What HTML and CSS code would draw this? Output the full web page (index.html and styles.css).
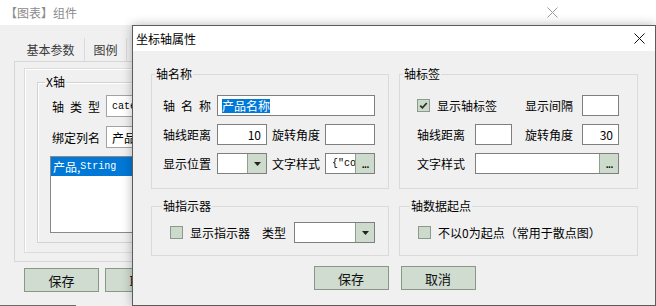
FILE: index.html
```html
<!DOCTYPE html>
<html lang="zh">
<head>
<meta charset="utf-8">
<title>坐标轴属性</title>
<link rel="stylesheet" href="styles.css">
</head>
<body>
<div class="back">
  <div class="back-title">
    <span>【图表】组件</span>
    <svg class="x-icon" width="11" height="11" viewBox="0 0 11 11"><path d="M0.5 0.5 L10.5 10.5 M10.5 0.5 L0.5 10.5" stroke="#9a9a9a" stroke-width="1" fill="none"/></svg>
  </div>
  <div class="tabs">
    <span class="tab tab-first">基本参数</span>
    <span class="tab">图例</span>
    <span class="tab"></span>
  </div>
  <div class="panel">
    <div class="panel-inner">
      <fieldset class="xgroup">
        <legend>X轴</legend>
        <div class="xrow"><span class="xlabel">轴&ensp;类&ensp;型</span><span class="xfield mono">category</span></div>
        <div class="xrow"><span class="xlabel">绑定列名</span><span class="xfield">产品</span></div>
        <div class="listbox"><div class="list-sel">产品,<span class="mono">String</span></div></div>
      </fieldset>
    </div>
  </div>
  <div class="back-buttons">
    <span class="btn">保存</span>
    <span class="btn">取消</span>
  </div>
  <div class="back-foot"></div>
</div>

<div class="dialog">
  <div class="dlg-title">
    <span>坐标轴属性</span>
    <svg class="x-icon" width="11" height="11" viewBox="0 0 11 11"><path d="M0.5 0.5 L10.5 10.5 M10.5 0.5 L0.5 10.5" stroke="#111" stroke-width="1" fill="none"/></svg>
  </div>
  <div class="dlg-body">
    <div class="groups">
      <fieldset class="group">
        <legend>轴名称</legend>
        <div class="grid g-name">
          <span class="lbl">轴&ensp;名&ensp;称</span>
          <span class="field span3"><span class="sel">产品名称</span></span>
          <span class="lbl">轴线距离</span>
          <span class="field num">10</span>
          <span class="lbl lbl-pad">旋转角度</span>
          <span class="field"></span>
          <span class="lbl">显示位置</span>
          <span class="field combo"><span class="combo-btn"><svg width="7" height="4" viewBox="0 0 7 4"><path d="M0 0 H7 L3.5 4 Z" fill="#222"/></svg></span></span>
          <span class="lbl lbl-pad">文字样式</span>
          <span class="field combo"><span class="field-text mono">{"co</span><span class="combo-btn dots">...</span></span>
        </div>
      </fieldset>
      <fieldset class="group">
        <legend>轴标签</legend>
        <div class="grid g-label">
          <span class="check-item span2"><span class="check on"><svg width="11" height="11" viewBox="0 0 11 11"><path d="M2.2 5.6 L4.4 7.8 L8.8 3" stroke="#2b2b2b" stroke-width="1.7" fill="none"/></svg></span>显示轴标签</span>
          <span class="lbl lbl-pad2">显示间隔</span>
          <span class="field"></span>
          <span class="lbl">轴线距离</span>
          <span class="field"></span>
          <span class="lbl lbl-pad2">旋转角度</span>
          <span class="field num">30</span>
          <span class="lbl">文字样式</span>
          <span class="field combo span3"><span class="field-text"></span><span class="combo-btn dots">...</span></span>
        </div>
      </fieldset>
      <fieldset class="group group-low">
        <legend>轴指示器</legend>
        <div class="line-row">
          <span class="check"></span>
          <span>显示指示器</span>
          <span class="type-lbl">类型</span>
          <span class="field combo type-combo"><span class="combo-btn"><svg width="7" height="4" viewBox="0 0 7 4"><path d="M0 0 H7 L3.5 4 Z" fill="#222"/></svg></span></span>
        </div>
      </fieldset>
      <fieldset class="group group-low">
        <legend>轴数据起点</legend>
        <div class="line-row">
          <span class="check"></span>
          <span>不以0为起点（常用于散点图）</span>
        </div>
      </fieldset>
    </div>
    <div class="dlg-buttons">
      <span class="btn">保存</span>
      <span class="btn">取消</span>
    </div>
  </div>
</div>
</body>
</html>
```
FILE: styles.css
```css
* { box-sizing: border-box; }
html, body { margin: 0; padding: 0; }
body {
  width: 656px;
  height: 306px;
  overflow: hidden;
  position: relative;
  background: #fff;
  font-family: "Noto Sans CJK SC", "Microsoft YaHei", sans-serif;
  font-size: 12px;
  color: #000;
}
.mono { font-family: "Liberation Mono", "Noto Sans CJK SC", monospace; font-size: 10px; }

/* ---------- background window ---------- */
.back {
  width: 568px;
  height: 306px;
  background: #f0f0f0;
  overflow: hidden;
}
.back-title {
  height: 25px;
  background: #fff;
  display: flex;
  align-items: center;
  justify-content: space-between;
  padding: 0 10px 0 5px;
  color: #8c8c8c;
}
.tabs {
  display: flex;
  height: 23px;
  margin: 13px 0 0 14px;
}
.tab {
  display: flex;
  align-items: center;
  justify-content: center;
  width: 42px;
  border-right: 1px solid #dadada;
  color: #3a3a3a;
}
.tab-first { width: 71px; padding-left: 3px; }
.panel {
  margin-left: 14px;
  width: 540px;
  height: 201px;
  border: 1px solid #d6d6d6;
  padding: 6px 0 0 9px;
}
.panel-inner {
  width: 520px;
  height: 185px;
  border: 1px solid #dcdcdc;
  box-shadow: inset 1px 1px 0 #fff;
  padding: 5px 0 0 12px;
}
.xgroup {
  margin: 0;
  width: 500px;
  height: 169px;
  border: 1px solid #d2d2d2;
  box-shadow: inset 1px 1px 0 #fff;
  padding: 5px 12px 9px 12px;
}
.xgroup legend {
  line-height: 16px;
  padding: 0 1px;
  margin-left: -5px;
}
.xrow {
  display: flex;
  align-items: center;
  height: 22px;
  margin-bottom: 9px;
}
.xlabel { width: 56px; padding-left: 2px; }
.xfield {
  display: flex;
  align-items: center;
  height: 22px;
  width: 120px;
  padding-left: 5px;
  background: #fff;
  border: 1px solid #a3a3a3;
}
.listbox {
  margin-top: -1px;
  width: 200px;
  height: 77px;
  background: #fff;
  border: 1px solid #8a8a8a;
}
.list-sel {
  height: 19px;
  background: #0078d7;
  color: #fff;
  display: flex;
  align-items: center;
  padding-left: 2px;
}
.back-buttons {
  display: flex;
  gap: 6px;
  margin: 6px 0 0 24px;
}
.back-foot {
  margin-top: 13px;
  width: 76px;
  height: 1px;
  background: #6a6a6a;
}

/* ---------- shared controls ---------- */
.btn {
  display: flex;
  align-items: center;
  justify-content: center;
  width: 75px;
  height: 24px;
  background: #cfdccf;
  border: 1px solid #889888;
  font-size: 13px;
  color: #111;
}
.x-icon { display: block; }

/* ---------- dialog ---------- */
.dialog {
  position: absolute;
  left: 132px;
  top: 25px;
  width: 524px;
  height: 281px;
  border: 1px solid #5c5c5c;
  background: #f0f0f0;
  box-shadow: 0 0 10px rgba(0, 0, 0, 0.28);
  display: flex;
  flex-direction: column;
}
.dlg-title {
  flex: none;
  height: 25px;
  background: #fff;
  display: flex;
  align-items: center;
  justify-content: space-between;
  padding: 0 10px 0 3px;
  font-size: 12px;
}
.dlg-body {
  padding: 15px 17px 0 18px;
}
.groups {
  display: grid;
  grid-template-columns: 238px 239px;
  column-gap: 10px;
  row-gap: 9px;
}
.group {
  margin: 0;
  min-width: 0;
  border: 1px solid #dadada;
  padding: 13px 12px 14px 11px;
}
.group legend {
  line-height: 16px;
  padding: 0 1px;
  margin-left: -8px;
}
.group-low { padding: 8px 12px 12px 18px; }
.grid {
  display: grid;
  grid-auto-rows: 21px;
  row-gap: 8px;
}
.g-name { grid-template-columns: 54px 50px 58px 50px; }
.g-label { grid-template-columns: 58px 37px 70px 37px; margin-left: 6px; }
.span2 { grid-column: span 2; }
.span3 { grid-column: span 3; }
.lbl { display: flex; align-items: center; white-space: nowrap; }
.lbl-pad { padding-left: 5px; }
.lbl-pad2 { padding-left: 13px; }
.field {
  display: flex;
  align-items: center;
  height: 21px;
  background: #fff;
  border: 1px solid #7f7f7f;
  padding-left: 4px;
  overflow: hidden;
}
.field.num { justify-content: flex-end; padding-right: 5px; }
.sel { background: #0078d7; color: #fff; line-height: 14px; }
.field.combo { padding: 0; }
.field-text { flex: 1; padding-left: 6px; white-space: nowrap; overflow: hidden; }
.combo-btn {
  margin-left: auto;
  flex: none;
  width: 19px;
  height: 100%;
  background: #cddbcd;
  border-left: 1px solid #8f9f8f;
  display: flex;
  align-items: center;
  justify-content: center;
}
.combo-btn.dots { margin-left: 0; align-items: flex-end; padding-bottom: 2px; font-size: 12px; letter-spacing: -1px; }
.check-item { display: flex; align-items: center; gap: 7px; }
.check {
  flex: none;
  width: 13px;
  height: 13px;
  background: #cbdacb;
  border: 1px solid #8c9a8c;
  display: flex;
  align-items: center;
  justify-content: center;
}
.line-row {
  display: flex;
  align-items: center;
  height: 21px;
}
.line-row .check { margin-right: 7px; }
.type-lbl { margin-left: 12px; }
.type-combo { margin-left: 8px; width: 81px; }
.dlg-buttons {
  display: flex;
  justify-content: center;
  gap: 12px;
  margin-top: 10px;
}
```
